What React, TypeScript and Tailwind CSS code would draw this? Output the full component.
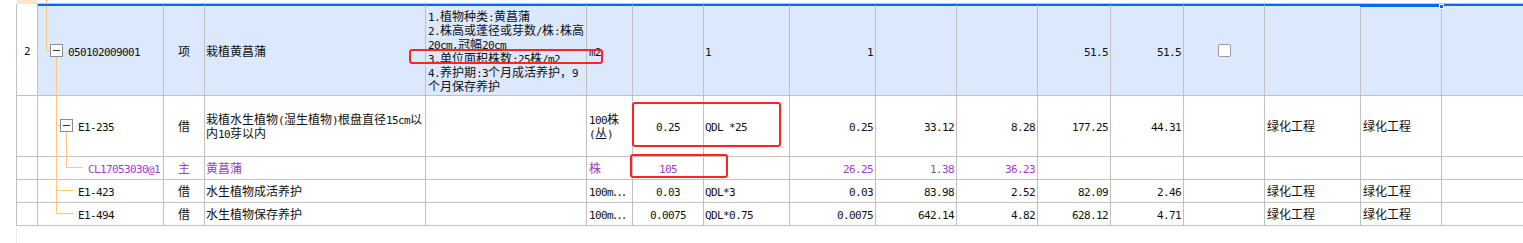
import React from 'react';

type Cell = string | string[] | React.ReactNode;

const CHECK = 'checkbox';

// split ascii runs (SimSun half-width look) from CJK runs
function Txt({ s }: { s: string }) {
  const parts = s.match(/[\x20-\x7e]+|[^\x20-\x7e]+/g) ?? [];
  return (
    <>
      {parts.map((p, i) =>
        /^[\x20-\x7e]/.test(p) ? (
          <span key={i} className="font-['DejaVu_Sans_Mono',monospace] text-[11px] tracking-[-0.62px] leading-[14px] whitespace-pre">{p}</span>
        ) : (
          <span key={i} className="font-['Noto_Sans_CJK_SC',sans-serif] text-[12px] leading-[14px]">{p}</span>
        )
      )}
    </>
  );
}

const align = [
  'justify-center',
  'justify-start',
  'justify-center',
  'justify-start pl-[1px]',
  'justify-start pl-[2px]',
  'justify-start pl-[2px]',
  'justify-center',
  'justify-start pl-[1px]',
  'justify-end pr-[2px]',
  'justify-end pr-[2px]',
  'justify-end pr-[2px]',
  'justify-end pr-[2px]',
  'justify-end pr-[2px]',
  'justify-center',
  'justify-start pl-[2px]',
  'justify-start pl-[2px]',
  'justify-start pl-[2px]',
];

type Row = { cells: Cell[]; indent: string; purple?: boolean; head?: boolean };

const rows: Row[] = [
  {
    head: true,
    indent: 'pl-[30px]',
    cells: [
      '2', '050102009001', '项', '栽植黄菖蒲',
      ['1.植物种类:黄菖蒲', '2.株高或蓬径或芽数/株:株高', '20cm,冠幅20cm', '3.单位面积株数:25株/m2', '4.养护期:3个月成活养护，9', '个月保存养护'],
      'm2', '', '1', '1', '', '', '51.5', '51.5', CHECK, '', '', '',
    ],
  },
  {
    indent: 'pl-[40px]',
    cells: [
      '', 'E1-235', '借', ['栽植水生植物(湿生植物)根盘直径15cm以', '内10芽以内'], '', ['100株', '(丛)'],
      '0.25', 'QDL *25', '0.25', '33.12', '8.28', '177.25', '44.31', '', '绿化工程', '绿化工程', '',
    ],
  },
  {
    indent: 'pl-[50px]',
    purple: true,
    cells: ['', 'CL17053030@1', '主', '黄菖蒲', '', '株', '105', '', '26.25', '1.38', '36.23', '', '', '', '', '', ''],
  },
  {
    indent: 'pl-[40px]',
    cells: ['', 'E1-423', '借', '水生植物成活养护', '', '100m⋯', '0.03', 'QDL*3', '0.03', '83.98', '2.52', '82.09', '2.46', '', '绿化工程', '绿化工程', ''],
  },
  {
    indent: 'pl-[40px]',
    cells: ['', 'E1-494', '借', '水生植物保存养护', '', '100m⋯', '0.0075', 'QDL*0.75', '0.0075', '642.14', '4.82', '628.12', '4.71', '', '绿化工程', '绿化工程', ''],
  },
];

function Content({ c }: { c: Cell }) {
  if (c === CHECK) {
    return <span className="block w-[13px] h-[13px] rounded-[2px] border border-[#9a9a9a] bg-white" />;
  }
  if (Array.isArray(c)) {
    return (
      <div className="flex flex-col">
        {(c as string[]).map((l, i) => (
          <div key={i} className="h-[14px] whitespace-nowrap leading-[14px]"><Txt s={l} /></div>
        ))}
      </div>
    );
  }
  if (typeof c === 'string') return <div className="h-[14px] whitespace-nowrap leading-[14px]"><Txt s={c} /></div>;
  return <>{c}</>;
}

export default function App() {
  return (
    <div className="relative w-[1523px] h-[243px] overflow-hidden bg-white text-[#111] font-['Noto_Sans_CJK_SC',sans-serif] text-[12px]">
      {/* strip above the grid */}
      <div className="flex h-[4px]">
        <div className="w-[17px]" />
        <div className="w-[20px] bg-[#fbe6cc]" />
        <div className="flex-1 border-b border-[#a9cbfa]" />
      </div>

      <div className="ml-[16px] w-max grid grid-cols-[21px_126px_41px_221px_161px_46px_71px_86px_86px_81px_81px_73px_73px_81px_96px_81px_100px] grid-rows-[92px_61px_23px_23px_23px] border-l border-[#c0c0c0]">
        {rows.map((r, ri) =>
          r.cells.map((c, ci) => (
            <div
              key={`${ri}-${ci}`}
              className={`flex items-center overflow-hidden border-r border-b border-[#c0c0c0] ${align[ci]} ${ci === 1 ? r.indent : ''} ${r.head && ci > 0 ? 'bg-[#dce8fc] border-t-2 border-t-[#0b66f4]' : 'bg-white'} ${r.purple ? 'text-[#a33cc6]' : ''}`}
            >
              <Content c={c} />
            </div>
          ))
        )}
      </div>
      <div className="ml-[16px] h-[20px] border-l border-[#ececec]" />

      {/* tree connectors */}
      <svg className="absolute left-0 top-0 pointer-events-none" width="1523" height="243">
        <g stroke="#ffc77a" strokeWidth="1" fill="none">
          <path d="M46.5 0V4M46.5 6V50.5H50" />
          <path d="M56.5 57V213.5M56.5 125.5H60M56.5 190.5H73M56.5 213.5H73" />
          <path d="M66.5 132V167.5H83" />
        </g>
        <rect x="50.5" y="44.5" width="12" height="12" fill="#fff" stroke="#8c8c8c" />
        <path d="M53 50.5H60" stroke="#333" />
        <rect x="60.5" y="119.5" width="12" height="12" fill="#fff" stroke="#8c8c8c" />
        <path d="M63 125.5H70" stroke="#333" />
      </svg>

      {/* selected cell marker */}
      <div className="absolute left-[1360px] top-[4px] w-[82px] h-[3px] bg-[#0b66f4]" />
      <div className="absolute left-[1439px] top-[4px] w-[5px] h-[5px] bg-[#0b66f4] border border-white" />

      {/* red annotation boxes */}
      <div className="absolute left-[409px] top-[49px] w-[194px] h-[15px] border-2 border-[#ff2424] rounded-[3px]" />
      <div className="absolute left-[632px] top-[102px] w-[149px] h-[45px] border-2 border-[#ff2424] rounded-[3px]" />
      <div className="absolute left-[630px] top-[154px] w-[98px] h-[24px] border-2 border-[#ff2424] rounded-[3px]" />
    </div>
  );
}
